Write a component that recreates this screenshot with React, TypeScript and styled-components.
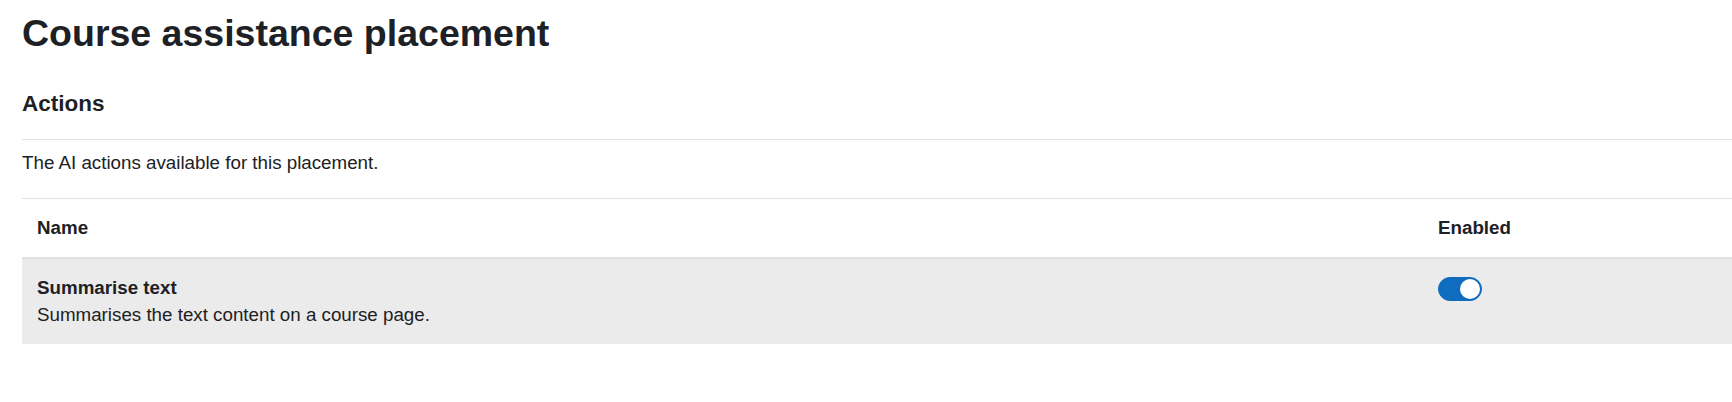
import styled, { createGlobalStyle } from 'styled-components';

const GlobalStyle = createGlobalStyle`
  body {
    margin: 0;
    background: #fff;
    color: #1d2125;
    font-family: "Liberation Sans", Arial, sans-serif;
    font-size: 18.75px;
    line-height: 27px;
  }
`;

interface IAction {
  name: string;
  description: string;
  enabled: boolean;
}

const actions: IAction[] = [
  {
    name: 'Summarise text',
    description: 'Summarises the text content on a course page.',
    enabled: true,
  },
];

export default function App() {
  return (
    <>
      <GlobalStyle />
      <Page>
        <Title>Course assistance placement</Title>
        <SectionTitle>Actions</SectionTitle>
        <Description>The AI actions available for this placement.</Description>
        <ActionTable>
          <thead>
            <tr>
              <HeadCell>Name</HeadCell>
              <HeadCell>Enabled</HeadCell>
            </tr>
          </thead>
          <tbody>
            {actions.map((action) => (
              <Row key={action.name}>
                <Cell>
                  <ActionName>{action.name}</ActionName>
                  <ActionDescription>{action.description}</ActionDescription>
                </Cell>
                <Cell>
                  <Switch on={action.enabled} aria-label={action.name} />
                </Cell>
              </Row>
            ))}
          </tbody>
        </ActionTable>
      </Page>
    </>
  );
}

const Page = styled.div`
  padding: 11px 0 40px 22px;
`;

const Title = styled.h1`
  margin: 0;
  font-size: 37.5px;
  line-height: 45px;
  font-weight: 700;
`;

const SectionTitle = styled.h3`
  margin: 34px 0 0;
  font-size: 22.5px;
  line-height: 27px;
  font-weight: 700;
`;

const Description = styled.div`
  margin-top: 22px;
  border-top: 1px solid #dee2e6;
  padding-top: 9px;
  padding-bottom: 22px;
`;

const ActionTable = styled.table`
  width: 100%;
  border-collapse: collapse;
  table-layout: fixed;

  th:first-child,
  td:first-child {
    width: 1371px;
  }
`;

const HeadCell = styled.th`
  text-align: left;
  font-weight: 700;
  padding: 15px 15px 16px;
  border-top: 1px solid #dee2e6;
  border-bottom: 2px solid #dee2e6;
`;

const Row = styled.tr`
  background: #ebebeb;
`;

const Cell = styled.td`
  vertical-align: top;
  padding: 15px 15px 16px;
`;

const ActionName = styled.div`
  font-weight: 700;
`;

const ActionDescription = styled.div``;

const Switch = styled.span<{ on: boolean }>`
  position: relative;
  display: block;
  margin-top: 3px;
  width: 44px;
  height: 24px;
  box-sizing: border-box;
  border-radius: 12px;
  background: ${({ on }) => (on ? '#0f6cbf' : '#fff')};
  border: 1px solid ${({ on }) => (on ? '#0f6cbf' : '#8f959e')};

  &::after {
    content: '';
    position: absolute;
    top: 1px;
    left: ${({ on }) => (on ? '21px' : '1px')};
    width: 20px;
    height: 20px;
    border-radius: 50%;
    background: ${({ on }) => (on ? '#fff' : '#8f959e')};
  }
`;
